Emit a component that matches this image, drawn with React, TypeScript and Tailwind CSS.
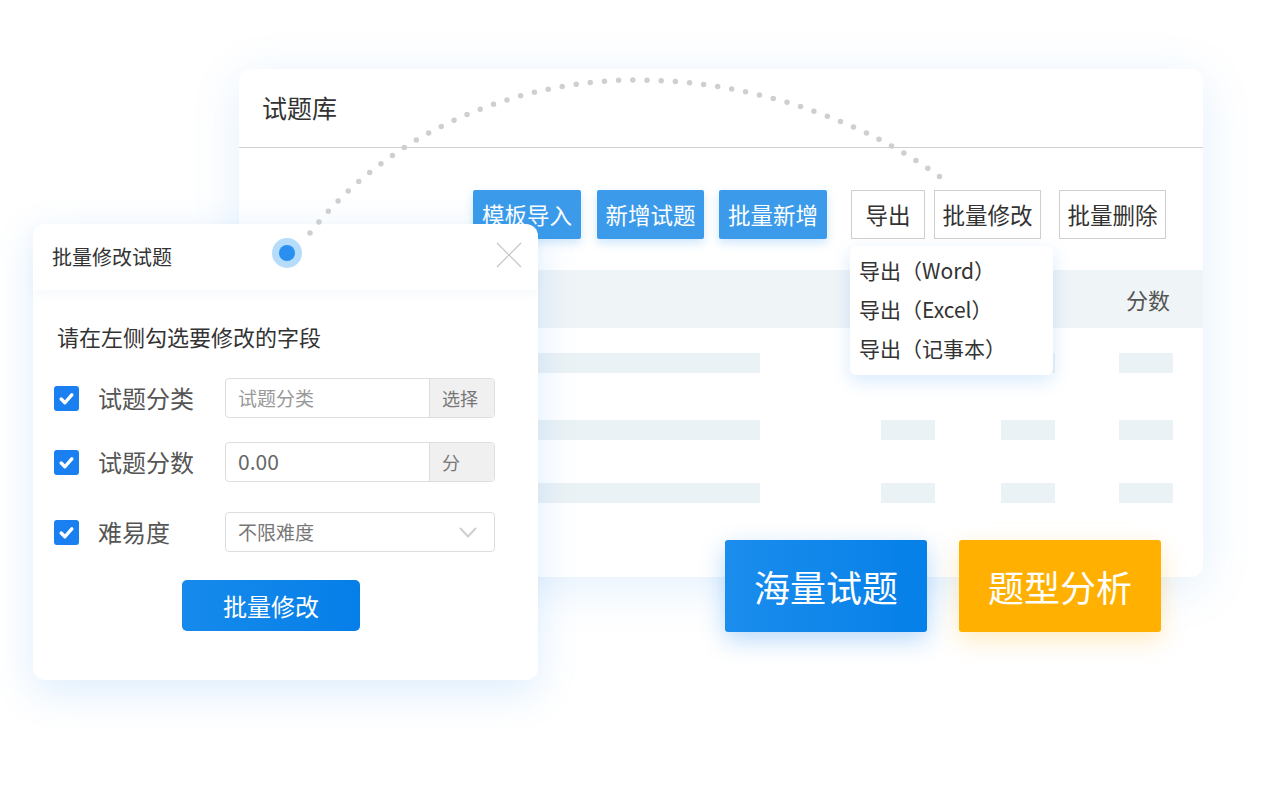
import React from 'react';

const font = { fontFamily: '"Noto Sans CJK SC", "Noto Sans", sans-serif' };

function Check() {
  return (
    <div className="w-[25px] h-[25px] rounded-[3px] bg-[#1a7ff0] flex items-center justify-center shrink-0">
      <svg width="17" height="17" viewBox="0 0 16 16">
        <path d="M3 8.5 L6.5 12 L13 4.5" fill="none" stroke="#fff" strokeWidth="3.2" strokeLinecap="round" strokeLinejoin="round" />
      </svg>
    </div>
  );
}

function FieldRow({ label, children, className }: any) {
  return (
    <div className={`flex items-center pl-[21px] ${className || ''}`}>
      <Check />
      <span className="ml-[19px] w-[127px] text-[24px] text-[#555] leading-none">{label}</span>
      {children}
    </div>
  );
}

function Modal() {
  return (
    <div className="absolute left-[33px] top-[224px] w-[505px] h-[456px] bg-white rounded-xl shadow-[0_12px_40px_rgba(40,140,240,0.16)] z-20">
      <div className="h-[66px] flex items-center justify-between pl-[19px] pr-4 shadow-[0_4px_8px_rgba(120,150,190,0.06)]">
        <span className="text-[20px] text-[#333]">批量修改试题</span>
        <svg width="26" height="26" viewBox="0 0 26 26" className="-mt-1">
          <path d="M1 1 L25 25 M25 1 L1 25" stroke="#c4c4c4" strokeWidth="1.2" />
        </svg>
      </div>
      <div className="pl-6 pt-[35px] text-[22px] text-[#333] leading-none">请在左侧勾选要修改的字段</div>
      <FieldRow label="试题分类" className="mt-[31px]">
        <div className="flex w-[270px] h-10 border border-[#dedede] rounded">
          <div className="flex-1 flex items-center pl-3 text-[19px] text-[#999]">试题分类</div>
          <div className="w-[65px] flex items-center pl-3 bg-[#f0f0f0] border-l border-[#dedede] text-[18px] text-[#777] rounded-r">选择</div>
        </div>
      </FieldRow>
      <FieldRow label="试题分数" className="mt-6">
        <div className="flex w-[270px] h-10 border border-[#dedede] rounded">
          <div className="flex-1 flex items-center pl-3 text-[21px] text-[#666]">0.00</div>
          <div className="w-[65px] flex items-center pl-3 bg-[#f0f0f0] border-l border-[#dedede] text-[18px] text-[#777] rounded-r">分</div>
        </div>
      </FieldRow>
      <FieldRow label="难易度" className="mt-[30px]">
        <div className="flex items-center justify-between w-[270px] h-10 border border-[#dedede] rounded pl-3 pr-[17px]">
          <span className="text-[19px] text-[#777]">不限难度</span>
          <svg width="18" height="11" viewBox="0 0 18 11">
            <path d="M1 1 L9 9.5 L17 1" fill="none" stroke="#cfcfcf" strokeWidth="2" />
          </svg>
        </div>
      </FieldRow>
      <div className="mt-[28px] ml-[149px] w-[178px] h-[51px] rounded-[5px] bg-gradient-to-r from-[#168aec] to-[#057fe8] flex items-center justify-center text-white text-[24px]">
        批量修改
      </div>
    </div>
  );
}

function ToolBtn({ label, w, ml, primary }: any) {
  return (
    <div
      className={`h-[49px] flex items-center justify-center text-[22.5px] shrink-0 ${
        primary
          ? 'bg-[#3b9bea] text-white rounded-[2px] shadow-[0_4px_10px_rgba(60,155,234,0.25)]'
          : 'bg-white text-[#333] border border-[#cfcfcf]'
      }`}
      style={{ width: w, marginLeft: ml }}
    >
      {label}
    </div>
  );
}

function Bar({ w, ml }: any) {
  return <div className="h-5 bg-[#ebf2f5] shrink-0" style={{ width: w, marginLeft: ml }} />;
}

function BankCard() {
  return (
    <div className="absolute left-[239px] top-[69px] w-[964px] h-[508px] bg-white rounded-xl shadow-[0_10px_50px_rgba(40,140,240,0.13)] z-10">
      <div className="h-[79px] border-b border-[#cfcfcf] flex items-center pl-[23px]">
        <span className="text-[25px] text-[#333]">试题库</span>
      </div>
      <div className="flex pt-[42px] pl-[234px]">
        <ToolBtn label="模板导入" w={108} ml={0} primary />
        <ToolBtn label="新增试题" w={107} ml={16} primary />
        <ToolBtn label="批量新增" w={108} ml={15} primary />
        <ToolBtn label="导出" w={74} ml={24} />
        <ToolBtn label="批量修改" w={107} ml={9} />
        <ToolBtn label="批量删除" w={107} ml={18} />
      </div>
      <div className="mt-[31px] h-[58px] bg-[#eff4f7] flex items-center justify-end pr-[33px]">
        <span className="text-[22px] text-[#555]">分数</span>
      </div>
      <div className="flex mt-[25px]">
        <Bar w={470} ml={51} />
        <Bar w={54} ml={121} />
        <Bar w={54} ml={66} />
        <Bar w={54} ml={64} />
      </div>
      <div className="flex mt-[47px]">
        <Bar w={470} ml={51} />
        <Bar w={54} ml={121} />
        <Bar w={54} ml={66} />
        <Bar w={54} ml={64} />
      </div>
      <div className="flex mt-[43px]">
        <Bar w={470} ml={51} />
        <Bar w={54} ml={121} />
        <Bar w={54} ml={66} />
        <Bar w={54} ml={64} />
      </div>
      <div className="absolute left-[611px] top-[177px] w-[203px] h-[129px] bg-white rounded-md shadow-[0_6px_18px_rgba(40,140,240,0.18)] pl-[9px] pt-[5px] text-[21px] text-[#333]">
        <div className="h-[39px] leading-[39px]">导出（Word）</div>
        <div className="h-[39px] leading-[39px]">导出（Excel）</div>
        <div className="h-[39px] leading-[39px]">导出（记事本）</div>
      </div>
    </div>
  );
}

export default function App() {
  return (
    <div className="relative w-[1280px] h-[790px] bg-white overflow-hidden" style={font}>
      <BankCard />
      <Modal />
      <div className="absolute left-[725px] top-[540px] w-[202px] h-[92px] rounded-[3px] bg-gradient-to-r from-[#1a8ded] to-[#0480e8] shadow-[0_8px_24px_rgba(20,130,235,0.3)] flex items-center justify-center text-white text-[36px] z-30">
        海量试题
      </div>
      <div className="absolute left-[959px] top-[540px] w-[202px] h-[92px] rounded-[3px] bg-[#ffb000] shadow-[0_8px_24px_rgba(255,176,0,0.25)] flex items-center justify-center text-white text-[36px] z-30">
        题型分析
      </div>
      <svg className="absolute inset-0 pointer-events-none z-40" width="1280" height="790">
        <path
          d="M310 233 C 390 130, 520 80, 635 80 C 760 80, 870 125, 943 179"
          fill="none"
          stroke="#cfcfcf"
          strokeWidth="5.5"
          strokeLinecap="round"
          strokeDasharray="0 14.2"
        />
        <circle cx="287" cy="253" r="15" fill="#b6dcfb" />
        <circle cx="287" cy="253" r="8" fill="#2b8ff0" />
      </svg>
    </div>
  );
}
